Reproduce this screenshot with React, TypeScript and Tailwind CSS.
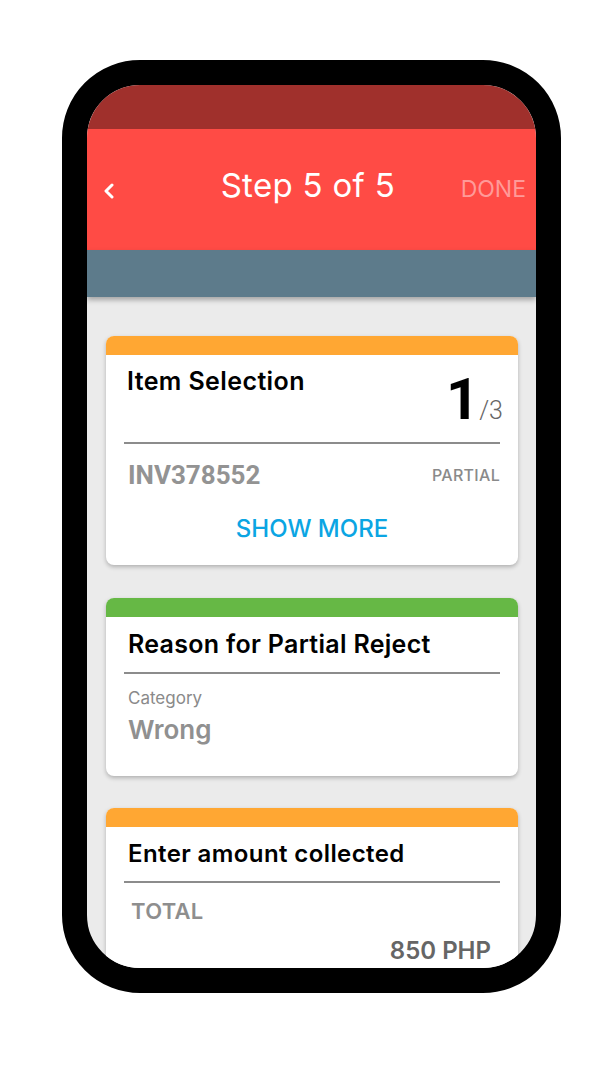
const sans = "font-['Inter','Noto_Sans',sans-serif]";
const roboto = "font-['Roboto','Liberation_Sans',sans-serif]";

function Divider() {
  return <div className="mx-[18px] h-[2px] bg-[#8c8c8c]" />;
}

function ItemCard() {
  return (
    <div className="overflow-hidden rounded-[8px] bg-white shadow-[0_2px_4px_rgba(0,0,0,0.25)]">
      <div className="h-[19px] bg-[#ffa733]" />
      <div className="flex items-start justify-between pl-[21px] pr-[15px] pt-[14px]">
        <div className={`${sans} text-[25px] font-semibold leading-none tracking-[0.4px] text-black`}>
          Item Selection
        </div>
        <div className={`${roboto} mt-[1px] flex items-baseline leading-none`}>
          <span className="text-[58px] font-bold tracking-[-3px] text-black">1</span>
          <span className="ml-[3px] text-[25px] font-light text-[#666]">/3</span>
        </div>
      </div>
      <div className="mt-[14px]">
        <Divider />
      </div>
      <div className="mt-[18px] flex items-center justify-between pl-[22px] pr-[18px]">
        <span className={`${roboto} text-[26px] font-bold leading-none text-[#939393]`}>INV378552</span>
        <span className={`${sans} text-[16px] font-medium leading-none tracking-[0.3px] text-[#8a8a8a]`}>
          PARTIAL
        </span>
      </div>
      <div className={`${sans} mt-[29px] pb-[24px] text-center text-[24px] font-medium leading-none text-[#0ba5e3]`}>
        SHOW MORE
      </div>
    </div>
  );
}

function ReasonCard() {
  return (
    <div className="mt-[33px] overflow-hidden rounded-[8px] bg-white shadow-[0_2px_4px_rgba(0,0,0,0.25)]">
      <div className="h-[19px] bg-[#66b845]" />
      <div className={`${sans} pl-[22px] pt-[15px] text-[25px] font-semibold leading-none tracking-[0.3px] text-black`}>
        Reason for Partial Reject
      </div>
      <div className="mt-[15px]">
        <Divider />
      </div>
      <div className={`${sans} mt-[16px] pl-[22px] text-[17px] leading-none text-[#8a8a8a]`}>Category</div>
      <div className={`${sans} mt-[10px] pb-[33px] pl-[22px] text-[26px] font-semibold leading-none text-[#909090]`}>
        Wrong
      </div>
    </div>
  );
}

function AmountCard() {
  return (
    <div className="mt-[32px] overflow-hidden rounded-t-[8px] bg-white shadow-[0_2px_4px_rgba(0,0,0,0.25)]">
      <div className="h-[19px] bg-[#ffa733]" />
      <div className={`${sans} pl-[22px] pt-[15px] text-[24px] font-semibold leading-none tracking-[0.4px] text-black`}>
        Enter amount collected
      </div>
      <div className="mt-[15px]">
        <Divider />
      </div>
      <div className={`${sans} mt-[17px] pl-[25px] text-[22px] font-semibold leading-none tracking-[0.3px] text-[#8e8e8e]`}>
        TOTAL
      </div>
      <div className={`${sans} mt-[17px] pb-[40px] pr-[27px] text-right text-[24px] font-semibold leading-none text-[#666]`}>
        850 PHP
      </div>
    </div>
  );
}

export default function App() {
  return (
    <div className="min-h-[1080px] w-[615px] bg-white pl-[62px] pt-[60px]">
      {/* phone frame */}
      <div className="h-[933px] w-[499px] overflow-hidden rounded-[78px] border-[25px] border-black bg-[#ebebeb]">
        <div className="h-[44px] bg-[#a0302c]" />
        <div className="flex h-[121px] items-center bg-[#ff4b45]">
          <div className="flex w-[68px] items-center pl-[16px] pt-[2px]">
            <svg width="12" height="16" viewBox="0 0 12 16">
              <polyline points="9,2 3,8 9,14" fill="none" stroke="white" strokeWidth="3" strokeLinecap="round" strokeLinejoin="round" />
            </svg>
          </div>
          <div className={`${sans} flex-1 pb-[9px] text-center text-[33px] leading-none tracking-[0.3px] text-white`}>Step 5 of 5</div>
          <div className={`${sans} pr-[10px] text-[23px] leading-none text-[#ff9a98]`}>DONE</div>
        </div>
        <div className="relative z-10 h-[47px] bg-[#5d7b8b] shadow-[0_3px_5px_rgba(0,0,0,0.3)]" />
        <div className="flex flex-col pl-[19px] pr-[18px] pt-[39px]">
          <ItemCard />
          <ReasonCard />
          <AmountCard />
        </div>
      </div>
    </div>
  );
}
